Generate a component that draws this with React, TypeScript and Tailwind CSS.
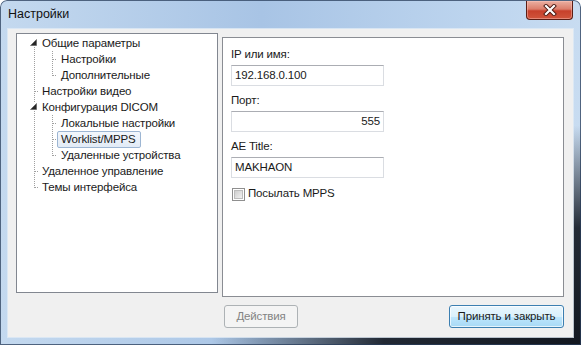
import React from 'react';

type Row = {
  label: string;
  level: 0 | 1;
  expander?: boolean;
  rootV: 'full' | 'top' | 'bottom';
  childV?: 'full' | 'top';
  selected?: boolean;
};

const rows: Row[] = [
  { label: 'Общие параметры', level: 0, expander: true, rootV: 'bottom' },
  { label: 'Настройки', level: 1, rootV: 'full', childV: 'full' },
  { label: 'Дополнительные', level: 1, rootV: 'full', childV: 'top' },
  { label: 'Настройки видео', level: 0, rootV: 'full' },
  { label: 'Конфигурация DICOM', level: 0, expander: true, rootV: 'full' },
  { label: 'Локальные настройки', level: 1, rootV: 'full', childV: 'full' },
  { label: 'Worklist/MPPS', level: 1, rootV: 'full', childV: 'full', selected: true },
  { label: 'Удаленные устройства', level: 1, rootV: 'full', childV: 'top' },
  { label: 'Удаленное управление', level: 0, rootV: 'full' },
  { label: 'Темы интерфейса', level: 0, rootV: 'top' },
];

const dot = { stroke: '#a0a0a0', strokeWidth: 1, strokeDasharray: '1 1', shapeRendering: 'crispEdges' as const };

const TreeRow: React.FC<{ row: Row }> = ({ row }) => {
  const w = row.level === 0 ? 21 : 40;
  const rootY = row.rootV === 'full' ? [0, 16] : row.rootV === 'top' ? [0, 9] : [8, 16];
  return (
    <div className="flex h-[16px] items-center">
      <svg width={w} height={16} className="shrink-0">
        <line x1={17.5} y1={rootY[0]} x2={17.5} y2={rootY[1]} {...dot} />
        {row.level === 0 && !row.expander && <line x1={18} y1={8.5} x2={21} y2={8.5} {...dot} />}
        {row.childV && (
          <line x1={35.5} y1={0} x2={35.5} y2={row.childV === 'full' ? 16 : 9} {...dot} />
        )}
        {row.level === 1 && <line x1={36} y1={8.5} x2={40} y2={8.5} {...dot} />}
        {row.expander && (
          <>
            <rect x={13} y={4} width={8} height={8} fill="#fff" />
            <polygon points="19.5,4.5 19.5,10.5 13.5,10.5" fill="#262626" stroke="#595959" strokeWidth={0.6} />
          </>
        )}
      </svg>
      <span
        className={
          row.selected
            ? 'h-[17px] leading-[15px] border border-[#9db6d3] rounded-[2px] bg-gradient-to-b from-[#f3f7fc] to-[#e2ebf6] pl-[3px] pr-[4px] whitespace-nowrap'
            : 'h-[16px] leading-[14px] border border-transparent pl-[3px] pr-[4px] whitespace-nowrap'
        }
      >
        {row.label}
      </span>
    </div>
  );
};

const Field: React.FC<{ label: string; value: string; right?: boolean; first?: boolean }> = ({ label, value, right, first }) => (
  <>
    <div className={`h-[16px] leading-[16px] ${first ? '' : 'mt-[6px]'}`}>{label}</div>
    <div
      className={`mt-[3px] w-[153px] h-[21px] border border-[#dadde2] border-t-[#abadb3] bg-white leading-[19px] ${
        right ? 'text-right pr-[3px]' : 'pl-[3px]'
      }`}
    >
      {value}
    </div>
  </>
);

export default function App() {
  return (
    <div className="w-[581px] h-[345px] flex flex-col rounded-t-[7px] overflow-hidden font-['Liberation_Sans',Arial,sans-serif] text-[11.5px] tracking-[-0.15px] text-[#1a1a1a] shadow-[inset_0_0_0_1px_rgba(40,60,90,0.75)] bg-[radial-gradient(ellipse_at_100%_100%,rgba(8,12,20,0.95)_0%,rgba(8,12,20,0.85)_24%,rgba(8,12,20,0)_45%),linear-gradient(to_right,#c4d9ef,#a8c4e5_45%,#bcd4ee_80%,#c8dcf1)]">
      {/* Title bar */}
      <div className="h-[29px] shrink-0 flex items-start">
        <div className="pl-[8px] pt-[6px] text-[12.5px] tracking-normal text-[#111] leading-[17px]">Настройки</div>
        <div className="ml-auto mr-[8px] mt-[1px] w-[47px] h-[19px] rounded-b-[4px] border border-t-0 border-[#5b1e15] bg-[linear-gradient(to_bottom,#ebb0a2_0%,#dc7e6b_45%,#c7402b_55%,#d0553c_100%)] flex items-center justify-center shadow-[inset_0_0_0_1px_rgba(255,200,190,0.45)]">
          <svg width="14" height="12" viewBox="0 0 14 12">
            <path d="M3 2 L11 10 M11 2 L3 10" stroke="#4a1810" strokeWidth="4" strokeLinecap="square" />
            <path d="M3 2 L11 10 M11 2 L3 10" stroke="#fff" strokeWidth="2.2" strokeLinecap="square" />
          </svg>
        </div>
      </div>

      {/* Client area */}
      <div className="mx-[8px] h-[308px] bg-[#f0f0f0] shadow-[0_0_0_1px_rgba(225,235,245,0.8)] flex flex-col">
        <div className="flex items-start pl-[8px] pt-[4px]">
          <div className="w-[202px] h-[260px] border border-[#828790] bg-white pt-[1px]">
            {rows.map((r) => (
              <TreeRow key={r.label} row={r} />
            ))}
          </div>
          <div className="ml-[4px] mt-[4px] w-[342px] h-[260px] border border-[#8a8d93] bg-white pl-[8px] pt-[8px]">
            <Field label="IP или имя:" value="192.168.0.100" first />
            <Field label="Порт:" value="555" right />
            <Field label="AE Title:" value="MAKHAON" />
            <div className="mt-[8px] h-[16px] flex items-center">
              <div className="ml-[1px] w-[13px] h-[13px] border border-[#8f8f8f] bg-white p-[1px]">
                <div className="w-full h-full bg-gradient-to-br from-[#cfcfcf] to-[#f2f2f2] border border-[#bdbdbd]" />
              </div>
              <span className="ml-[3px]">Посылать MPPS</span>
            </div>
          </div>
        </div>

        <div className="flex items-start mt-[8px]">
          <div className="ml-[216px] w-[74px] h-[23px] rounded-[3px] border border-[#adb2b5] bg-[#f4f4f4] text-[#838383] flex items-center justify-center">
            Действия
          </div>
          <div className="ml-auto mr-[9px] w-[115px] h-[23px] rounded-[3px] border border-[#3c7fb1] bg-[linear-gradient(to_bottom,#eaf6fd_0%,#d9f0fc_50%,#bee6fd_51%,#a7d9f5_100%)] shadow-[inset_0_0_0_1px_rgba(255,255,255,0.7)] flex items-center justify-center">
            Принять и закрыть
          </div>
        </div>
      </div>
    </div>
  );
}
